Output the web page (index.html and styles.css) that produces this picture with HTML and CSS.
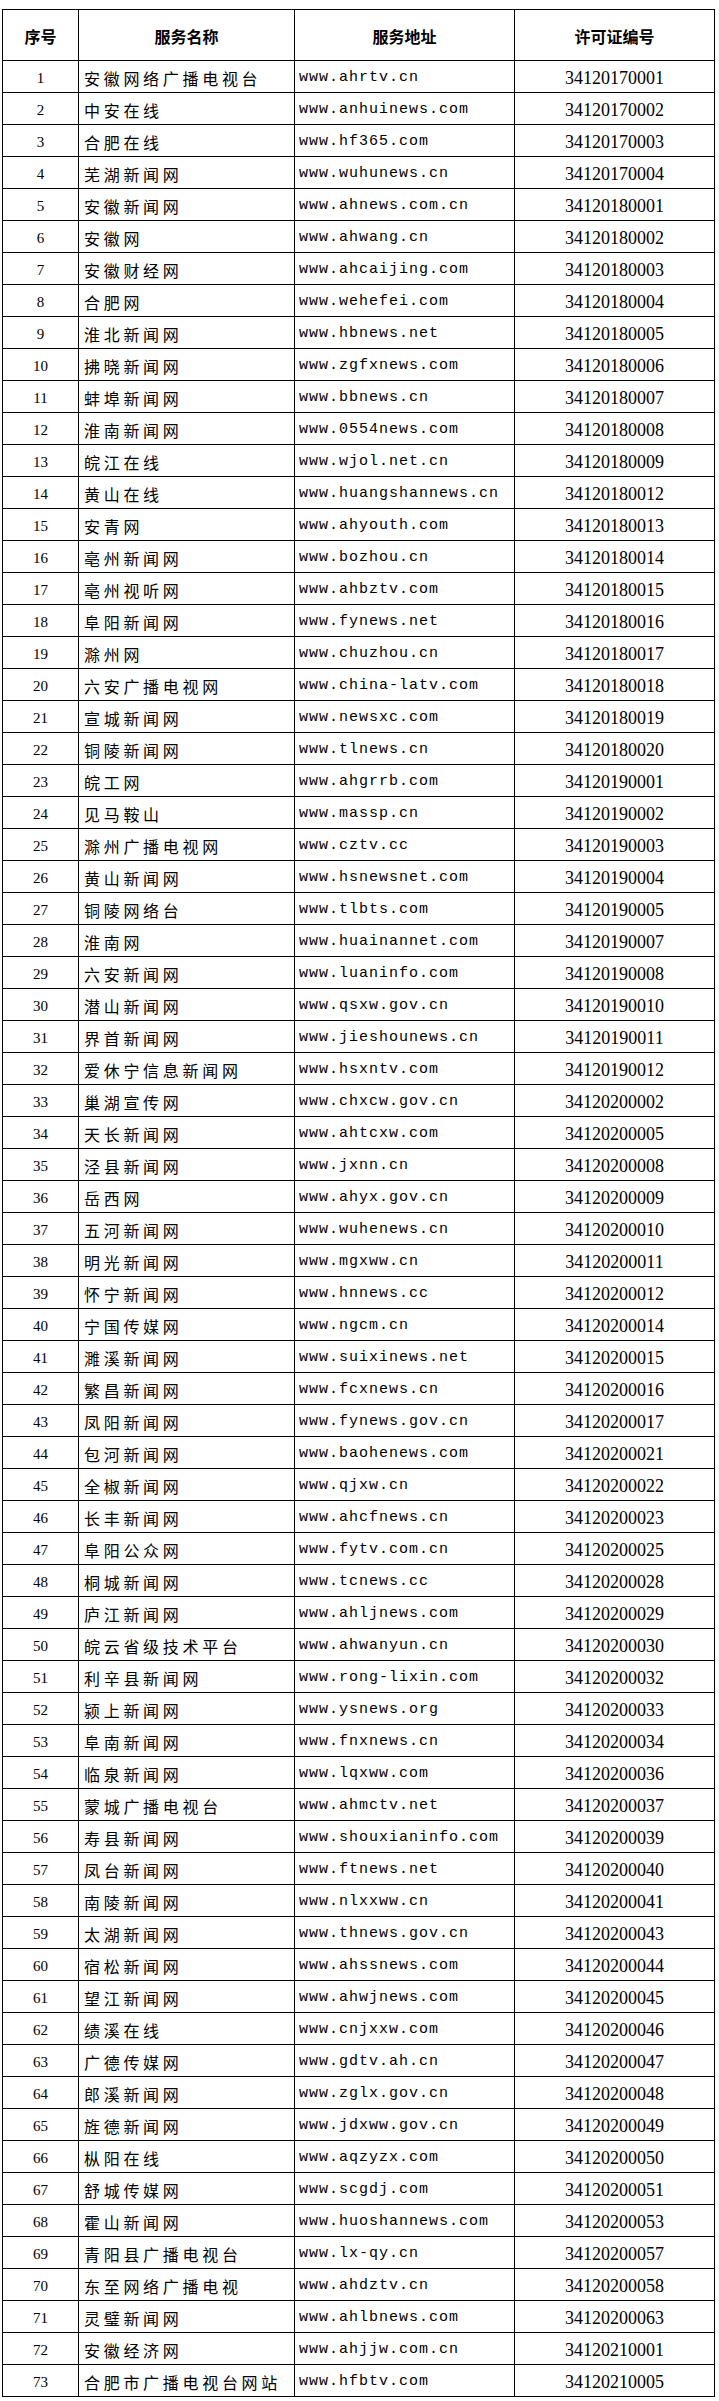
FILE: index.html
```html
<!DOCTYPE html>
<html lang="zh-CN">
<head>
<meta charset="utf-8">
<title>许可证列表</title>
<link rel="stylesheet" href="styles.css">
</head>
<body>
<table class="list">
<colgroup>
<col class="c-no"><col class="c-name"><col class="c-url"><col class="c-lic">
</colgroup>
<thead>
<tr class="head"><th>序号</th><th>服务名称</th><th>服务地址</th><th>许可证编号</th></tr>
</thead>
<tbody>
<tr><td class="no">1</td><td class="name">安徽网络广播电视台</td><td class="url">www.ahrtv.cn</td><td class="lic">34120170001</td></tr>
<tr><td class="no">2</td><td class="name">中安在线</td><td class="url">www.anhuinews.com</td><td class="lic">34120170002</td></tr>
<tr><td class="no">3</td><td class="name">合肥在线</td><td class="url">www.hf365.com</td><td class="lic">34120170003</td></tr>
<tr><td class="no">4</td><td class="name">芜湖新闻网</td><td class="url">www.wuhunews.cn</td><td class="lic">34120170004</td></tr>
<tr><td class="no">5</td><td class="name">安徽新闻网</td><td class="url">www.ahnews.com.cn</td><td class="lic">34120180001</td></tr>
<tr><td class="no">6</td><td class="name">安徽网</td><td class="url">www.ahwang.cn</td><td class="lic">34120180002</td></tr>
<tr><td class="no">7</td><td class="name">安徽财经网</td><td class="url">www.ahcaijing.com</td><td class="lic">34120180003</td></tr>
<tr><td class="no">8</td><td class="name">合肥网</td><td class="url">www.wehefei.com</td><td class="lic">34120180004</td></tr>
<tr><td class="no">9</td><td class="name">淮北新闻网</td><td class="url">www.hbnews.net</td><td class="lic">34120180005</td></tr>
<tr><td class="no">10</td><td class="name">拂晓新闻网</td><td class="url">www.zgfxnews.com</td><td class="lic">34120180006</td></tr>
<tr><td class="no">11</td><td class="name">蚌埠新闻网</td><td class="url">www.bbnews.cn</td><td class="lic">34120180007</td></tr>
<tr><td class="no">12</td><td class="name">淮南新闻网</td><td class="url">www.0554news.com</td><td class="lic">34120180008</td></tr>
<tr><td class="no">13</td><td class="name">皖江在线</td><td class="url">www.wjol.net.cn</td><td class="lic">34120180009</td></tr>
<tr><td class="no">14</td><td class="name">黄山在线</td><td class="url">www.huangshannews.cn</td><td class="lic">34120180012</td></tr>
<tr><td class="no">15</td><td class="name">安青网</td><td class="url">www.ahyouth.com</td><td class="lic">34120180013</td></tr>
<tr><td class="no">16</td><td class="name">亳州新闻网</td><td class="url">www.bozhou.cn</td><td class="lic">34120180014</td></tr>
<tr><td class="no">17</td><td class="name">亳州视听网</td><td class="url">www.ahbztv.com</td><td class="lic">34120180015</td></tr>
<tr><td class="no">18</td><td class="name">阜阳新闻网</td><td class="url">www.fynews.net</td><td class="lic">34120180016</td></tr>
<tr><td class="no">19</td><td class="name">滁州网</td><td class="url">www.chuzhou.cn</td><td class="lic">34120180017</td></tr>
<tr><td class="no">20</td><td class="name">六安广播电视网</td><td class="url">www.china-latv.com</td><td class="lic">34120180018</td></tr>
<tr><td class="no">21</td><td class="name">宣城新闻网</td><td class="url">www.newsxc.com</td><td class="lic">34120180019</td></tr>
<tr><td class="no">22</td><td class="name">铜陵新闻网</td><td class="url">www.tlnews.cn</td><td class="lic">34120180020</td></tr>
<tr><td class="no">23</td><td class="name">皖工网</td><td class="url">www.ahgrrb.com</td><td class="lic">34120190001</td></tr>
<tr><td class="no">24</td><td class="name">见马鞍山</td><td class="url">www.massp.cn</td><td class="lic">34120190002</td></tr>
<tr><td class="no">25</td><td class="name">滁州广播电视网</td><td class="url">www.cztv.cc</td><td class="lic">34120190003</td></tr>
<tr><td class="no">26</td><td class="name">黄山新闻网</td><td class="url">www.hsnewsnet.com</td><td class="lic">34120190004</td></tr>
<tr><td class="no">27</td><td class="name">铜陵网络台</td><td class="url">www.tlbts.com</td><td class="lic">34120190005</td></tr>
<tr><td class="no">28</td><td class="name">淮南网</td><td class="url">www.huainannet.com</td><td class="lic">34120190007</td></tr>
<tr><td class="no">29</td><td class="name">六安新闻网</td><td class="url">www.luaninfo.com</td><td class="lic">34120190008</td></tr>
<tr><td class="no">30</td><td class="name">潜山新闻网</td><td class="url">www.qsxw.gov.cn</td><td class="lic">34120190010</td></tr>
<tr><td class="no">31</td><td class="name">界首新闻网</td><td class="url">www.jieshounews.cn</td><td class="lic">34120190011</td></tr>
<tr><td class="no">32</td><td class="name">爱休宁信息新闻网</td><td class="url">www.hsxntv.com</td><td class="lic">34120190012</td></tr>
<tr><td class="no">33</td><td class="name">巢湖宣传网</td><td class="url">www.chxcw.gov.cn</td><td class="lic">34120200002</td></tr>
<tr><td class="no">34</td><td class="name">天长新闻网</td><td class="url">www.ahtcxw.com</td><td class="lic">34120200005</td></tr>
<tr><td class="no">35</td><td class="name">泾县新闻网</td><td class="url">www.jxnn.cn</td><td class="lic">34120200008</td></tr>
<tr><td class="no">36</td><td class="name">岳西网</td><td class="url">www.ahyx.gov.cn</td><td class="lic">34120200009</td></tr>
<tr><td class="no">37</td><td class="name">五河新闻网</td><td class="url">www.wuhenews.cn</td><td class="lic">34120200010</td></tr>
<tr><td class="no">38</td><td class="name">明光新闻网</td><td class="url">www.mgxww.cn</td><td class="lic">34120200011</td></tr>
<tr><td class="no">39</td><td class="name">怀宁新闻网</td><td class="url">www.hnnews.cc</td><td class="lic">34120200012</td></tr>
<tr><td class="no">40</td><td class="name">宁国传媒网</td><td class="url">www.ngcm.cn</td><td class="lic">34120200014</td></tr>
<tr><td class="no">41</td><td class="name">濉溪新闻网</td><td class="url">www.suixinews.net</td><td class="lic">34120200015</td></tr>
<tr><td class="no">42</td><td class="name">繁昌新闻网</td><td class="url">www.fcxnews.cn</td><td class="lic">34120200016</td></tr>
<tr><td class="no">43</td><td class="name">凤阳新闻网</td><td class="url">www.fynews.gov.cn</td><td class="lic">34120200017</td></tr>
<tr><td class="no">44</td><td class="name">包河新闻网</td><td class="url">www.baohenews.com</td><td class="lic">34120200021</td></tr>
<tr><td class="no">45</td><td class="name">全椒新闻网</td><td class="url">www.qjxw.cn</td><td class="lic">34120200022</td></tr>
<tr><td class="no">46</td><td class="name">长丰新闻网</td><td class="url">www.ahcfnews.cn</td><td class="lic">34120200023</td></tr>
<tr><td class="no">47</td><td class="name">阜阳公众网</td><td class="url">www.fytv.com.cn</td><td class="lic">34120200025</td></tr>
<tr><td class="no">48</td><td class="name">桐城新闻网</td><td class="url">www.tcnews.cc</td><td class="lic">34120200028</td></tr>
<tr><td class="no">49</td><td class="name">庐江新闻网</td><td class="url">www.ahljnews.com</td><td class="lic">34120200029</td></tr>
<tr><td class="no">50</td><td class="name">皖云省级技术平台</td><td class="url">www.ahwanyun.cn</td><td class="lic">34120200030</td></tr>
<tr><td class="no">51</td><td class="name">利辛县新闻网</td><td class="url">www.rong-lixin.com</td><td class="lic">34120200032</td></tr>
<tr><td class="no">52</td><td class="name">颍上新闻网</td><td class="url">www.ysnews.org</td><td class="lic">34120200033</td></tr>
<tr><td class="no">53</td><td class="name">阜南新闻网</td><td class="url">www.fnxnews.cn</td><td class="lic">34120200034</td></tr>
<tr><td class="no">54</td><td class="name">临泉新闻网</td><td class="url">www.lqxww.com</td><td class="lic">34120200036</td></tr>
<tr><td class="no">55</td><td class="name">蒙城广播电视台</td><td class="url">www.ahmctv.net</td><td class="lic">34120200037</td></tr>
<tr><td class="no">56</td><td class="name">寿县新闻网</td><td class="url">www.shouxianinfo.com</td><td class="lic">34120200039</td></tr>
<tr><td class="no">57</td><td class="name">凤台新闻网</td><td class="url">www.ftnews.net</td><td class="lic">34120200040</td></tr>
<tr><td class="no">58</td><td class="name">南陵新闻网</td><td class="url">www.nlxxww.cn</td><td class="lic">34120200041</td></tr>
<tr><td class="no">59</td><td class="name">太湖新闻网</td><td class="url">www.thnews.gov.cn</td><td class="lic">34120200043</td></tr>
<tr><td class="no">60</td><td class="name">宿松新闻网</td><td class="url">www.ahssnews.com</td><td class="lic">34120200044</td></tr>
<tr><td class="no">61</td><td class="name">望江新闻网</td><td class="url">www.ahwjnews.com</td><td class="lic">34120200045</td></tr>
<tr><td class="no">62</td><td class="name">绩溪在线</td><td class="url">www.cnjxxw.com</td><td class="lic">34120200046</td></tr>
<tr><td class="no">63</td><td class="name">广德传媒网</td><td class="url">www.gdtv.ah.cn</td><td class="lic">34120200047</td></tr>
<tr><td class="no">64</td><td class="name">郎溪新闻网</td><td class="url">www.zglx.gov.cn</td><td class="lic">34120200048</td></tr>
<tr><td class="no">65</td><td class="name">旌德新闻网</td><td class="url">www.jdxww.gov.cn</td><td class="lic">34120200049</td></tr>
<tr><td class="no">66</td><td class="name">枞阳在线</td><td class="url">www.aqzyzx.com</td><td class="lic">34120200050</td></tr>
<tr><td class="no">67</td><td class="name">舒城传媒网</td><td class="url">www.scgdj.com</td><td class="lic">34120200051</td></tr>
<tr><td class="no">68</td><td class="name">霍山新闻网</td><td class="url">www.huoshannews.com</td><td class="lic">34120200053</td></tr>
<tr><td class="no">69</td><td class="name">青阳县广播电视台</td><td class="url">www.lx-qy.cn</td><td class="lic">34120200057</td></tr>
<tr><td class="no">70</td><td class="name">东至网络广播电视</td><td class="url">www.ahdztv.cn</td><td class="lic">34120200058</td></tr>
<tr><td class="no">71</td><td class="name">灵璧新闻网</td><td class="url">www.ahlbnews.com</td><td class="lic">34120200063</td></tr>
<tr><td class="no">72</td><td class="name">安徽经济网</td><td class="url">www.ahjjw.com.cn</td><td class="lic">34120210001</td></tr>
<tr><td class="no">73</td><td class="name">合肥市广播电视台网站</td><td class="url">www.hfbtv.com</td><td class="lic">34120210005</td></tr>
</tbody>
</table>
</body>
</html>
```

FILE: styles.css
```css
html, body {
  margin: 0;
  padding: 0;
  background: #ffffff;
}

body {
  color: #000000;
  font-family: "Noto Sans CJK SC", "Liberation Serif", serif;
}

.list {
  margin: 9px 0 0 2px;
  width: 712px;
  table-layout: fixed;
  border-collapse: collapse;
}

.c-no { width: 76px; }
.c-name { width: 216px; }
.c-url { width: 220px; }
.c-lic { width: 200px; }

.list th,
.list td {
  border: 1px solid #000000;
  padding: 2px 0 0 0;
  vertical-align: middle;
  white-space: nowrap;
  overflow: hidden;
}

.head {
  height: 51px;
}

.list th {
  font-family: "Noto Sans CJK SC", sans-serif;
  font-weight: 700;
  font-size: 16px;
  text-align: center;
  line-height: 20px;
}

.list tbody tr {
  height: 32px;
}

.no {
  text-align: center;
  font-family: "Liberation Serif", serif;
  font-size: 15px;
  line-height: 20px;
}

.name {
  padding-left: 5px !important;
  font-family: "Noto Sans CJK SC", sans-serif;
  font-size: 16px;
  letter-spacing: 3.7px;
  line-height: 20px;
}

.url {
  padding-left: 4px !important;
  font-family: "Liberation Mono", monospace;
  font-size: 15px;
  letter-spacing: 1px;
  line-height: 20px;
}

.lic {
  text-align: center;
  font-family: "Liberation Serif", serif;
  font-size: 18px;
  line-height: 20px;
}
```
